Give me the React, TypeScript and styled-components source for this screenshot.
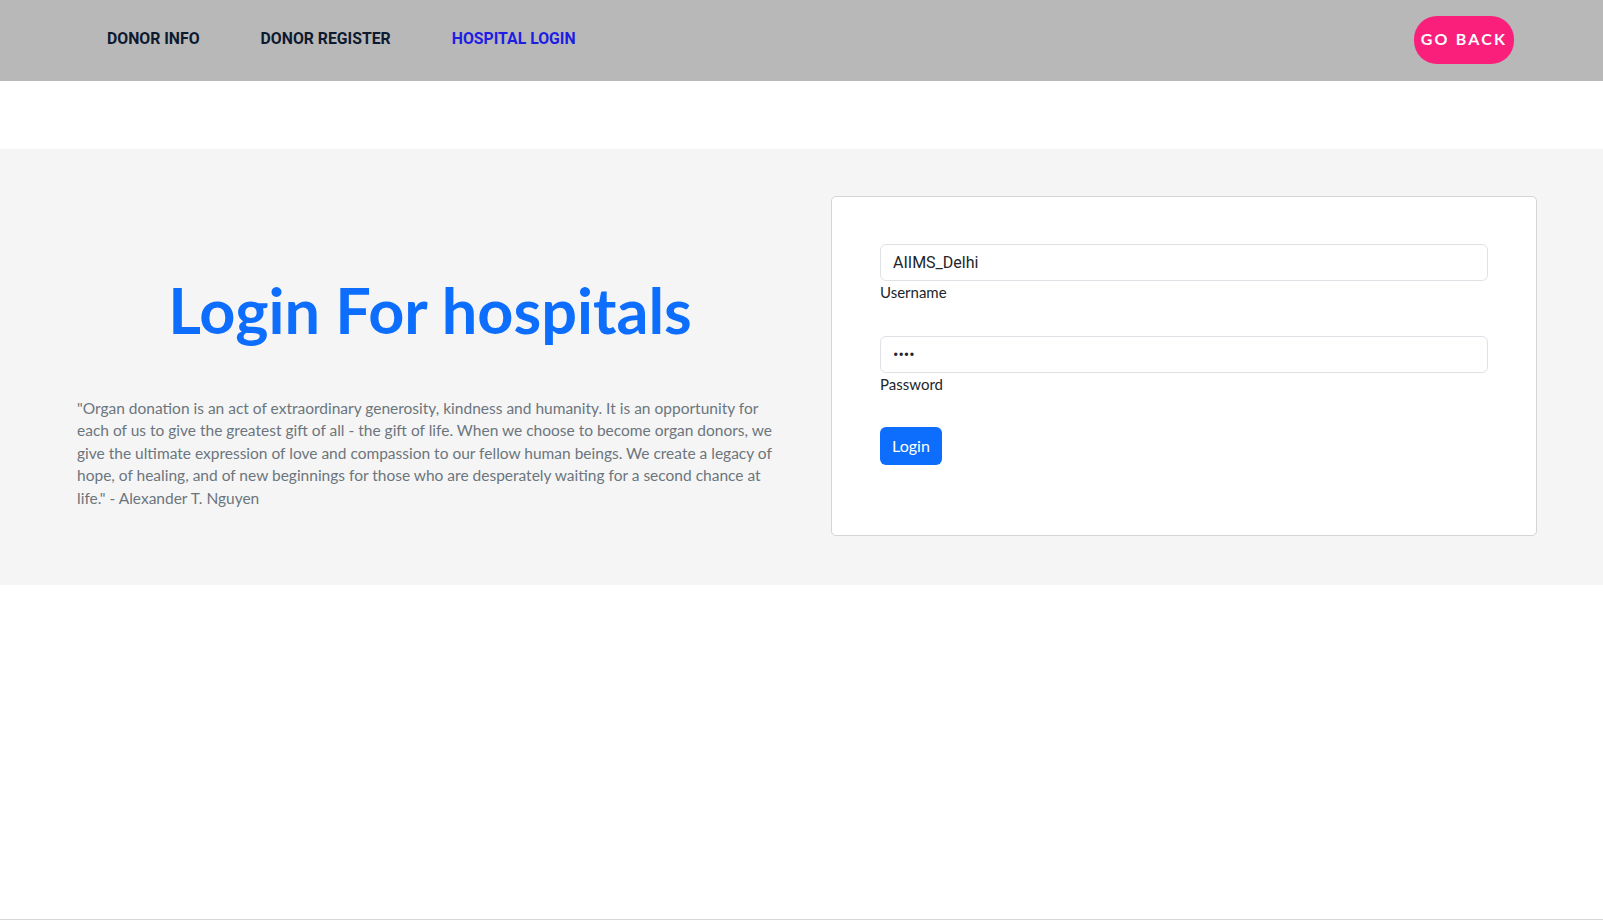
import styled, { createGlobalStyle } from "styled-components";

const GlobalStyle = createGlobalStyle`
  * {
    box-sizing: border-box;
  }
  body {
    margin: 0;
    font-family: Lato, "Noto Sans", sans-serif;
    color: #212529;
    background: #ffffff;
  }
`;

const Page = styled.div`
  display: flex;
  flex-direction: column;
  min-height: 100vh;
`;

const Header = styled.header`
  display: flex;
  align-items: center;
  justify-content: space-between;
  height: 81px;
  padding: 0 89px 0 107px;
  background: #b8b8b8;
`;

const Nav = styled.nav`
  display: flex;
  gap: 61px;
  margin-top: -5px;
`;

const NavLink = styled.a<{ $active?: boolean }>`
  font-family: Roboto, "Liberation Sans", sans-serif;
  font-size: 15.8px;
  font-weight: 700;
  color: ${(p) => (p.$active ? "#1d1de3" : "#0d1a30")};
  text-decoration: none;
  cursor: pointer;
`;

const BackButton = styled.button`
  all: unset;
  display: flex;
  align-items: center;
  justify-content: center;
  width: 100px;
  height: 45px;
  padding-bottom: 3px;
  margin-top: -2px;
  border-radius: 23px;
  background: #f91f7b;
  color: #ffffff;
  font-family: Lato, sans-serif;
  font-size: 16px;
  font-weight: 700;
  letter-spacing: 2.2px;
  cursor: pointer;
`;

const Section = styled.section`
  display: grid;
  grid-template-columns: 1fr 1fr;
  gap: 48px;
  margin-top: 68px;
  padding: 47px 66px 49px 77px;
  background: #f5f5f5;
`;

const Intro = styled.div`
  display: flex;
  flex-direction: column;
  padding-top: 76px;
`;

const Heading = styled.h1`
  margin: 0 0 49px;
  text-align: center;
  font-family: Lato, sans-serif;
  font-size: 63px;
  font-weight: 700;
  line-height: 1.2;
  color: #0d6efd;
`;

const Quote = styled.p`
  margin: 0;
  font-size: 15.5px;
  line-height: 22.5px;
  color: #6c757d;
`;

const Card = styled.form`
  display: flex;
  flex-direction: column;
  padding: 47px 48px 70px;
  background: #ffffff;
  border: 1px solid #d3d4d6;
  border-radius: 5px;
`;

const Field = styled.div`
  display: flex;
  flex-direction: column;
  margin-bottom: 32px;
`;

const Input = styled.input`
  height: 37px;
  padding: 0 12px;
  font-family: Roboto, "Liberation Sans", sans-serif;
  font-size: 16px;
  color: #212529;
  background: #ffffff;
  border: 1px solid #dee2e6;
  border-radius: 6px;
  outline: none;
`;

const Label = styled.label`
  font-size: 15px;
  line-height: 1.5;
  color: #212529;
`;

const LoginButton = styled.button`
  all: unset;
  align-self: flex-start;
  width: 62px;
  height: 38px;
  text-align: center;
  line-height: 38px;
  border-radius: 6px;
  background: #0d6efd;
  color: #ffffff;
  font-family: Lato, sans-serif;
  font-size: 16px;
  cursor: pointer;
`;

const Footer = styled.footer`
  margin-top: auto;
  height: 2px;
  border-top: 1px solid #d6d6d6;
`;

export default function App() {
  return (
    <Page>
      <GlobalStyle />
      <Header>
        <Nav>
          <NavLink>DONOR INFO</NavLink>
          <NavLink>DONOR REGISTER</NavLink>
          <NavLink $active>HOSPITAL LOGIN</NavLink>
        </Nav>
        <BackButton>GO BACK</BackButton>
      </Header>
      <Section>
        <Intro>
          <Heading>Login For hospitals</Heading>
          <Quote>
            "Organ donation is an act of extraordinary generosity, kindness and
            humanity. It is an opportunity for each of us to give the greatest
            gift of all - the gift of life. When we choose to become organ
            donors, we give the ultimate expression of love and compassion to
            our fellow human beings. We create a legacy of hope, of healing, and
            of new beginnings for those who are desperately waiting for a second
            chance at life." - Alexander T. Nguyen
          </Quote>
        </Intro>
        <Card onSubmit={(e) => e.preventDefault()}>
          <Field>
            <Input id="username" defaultValue="AIIMS_Delhi" />
            <Label htmlFor="username">Username</Label>
          </Field>
          <Field>
            <Input id="password" type="password" defaultValue="1234" />
            <Label htmlFor="password">Password</Label>
          </Field>
          <LoginButton>Login</LoginButton>
        </Card>
      </Section>
      <Footer />
    </Page>
  );
}
